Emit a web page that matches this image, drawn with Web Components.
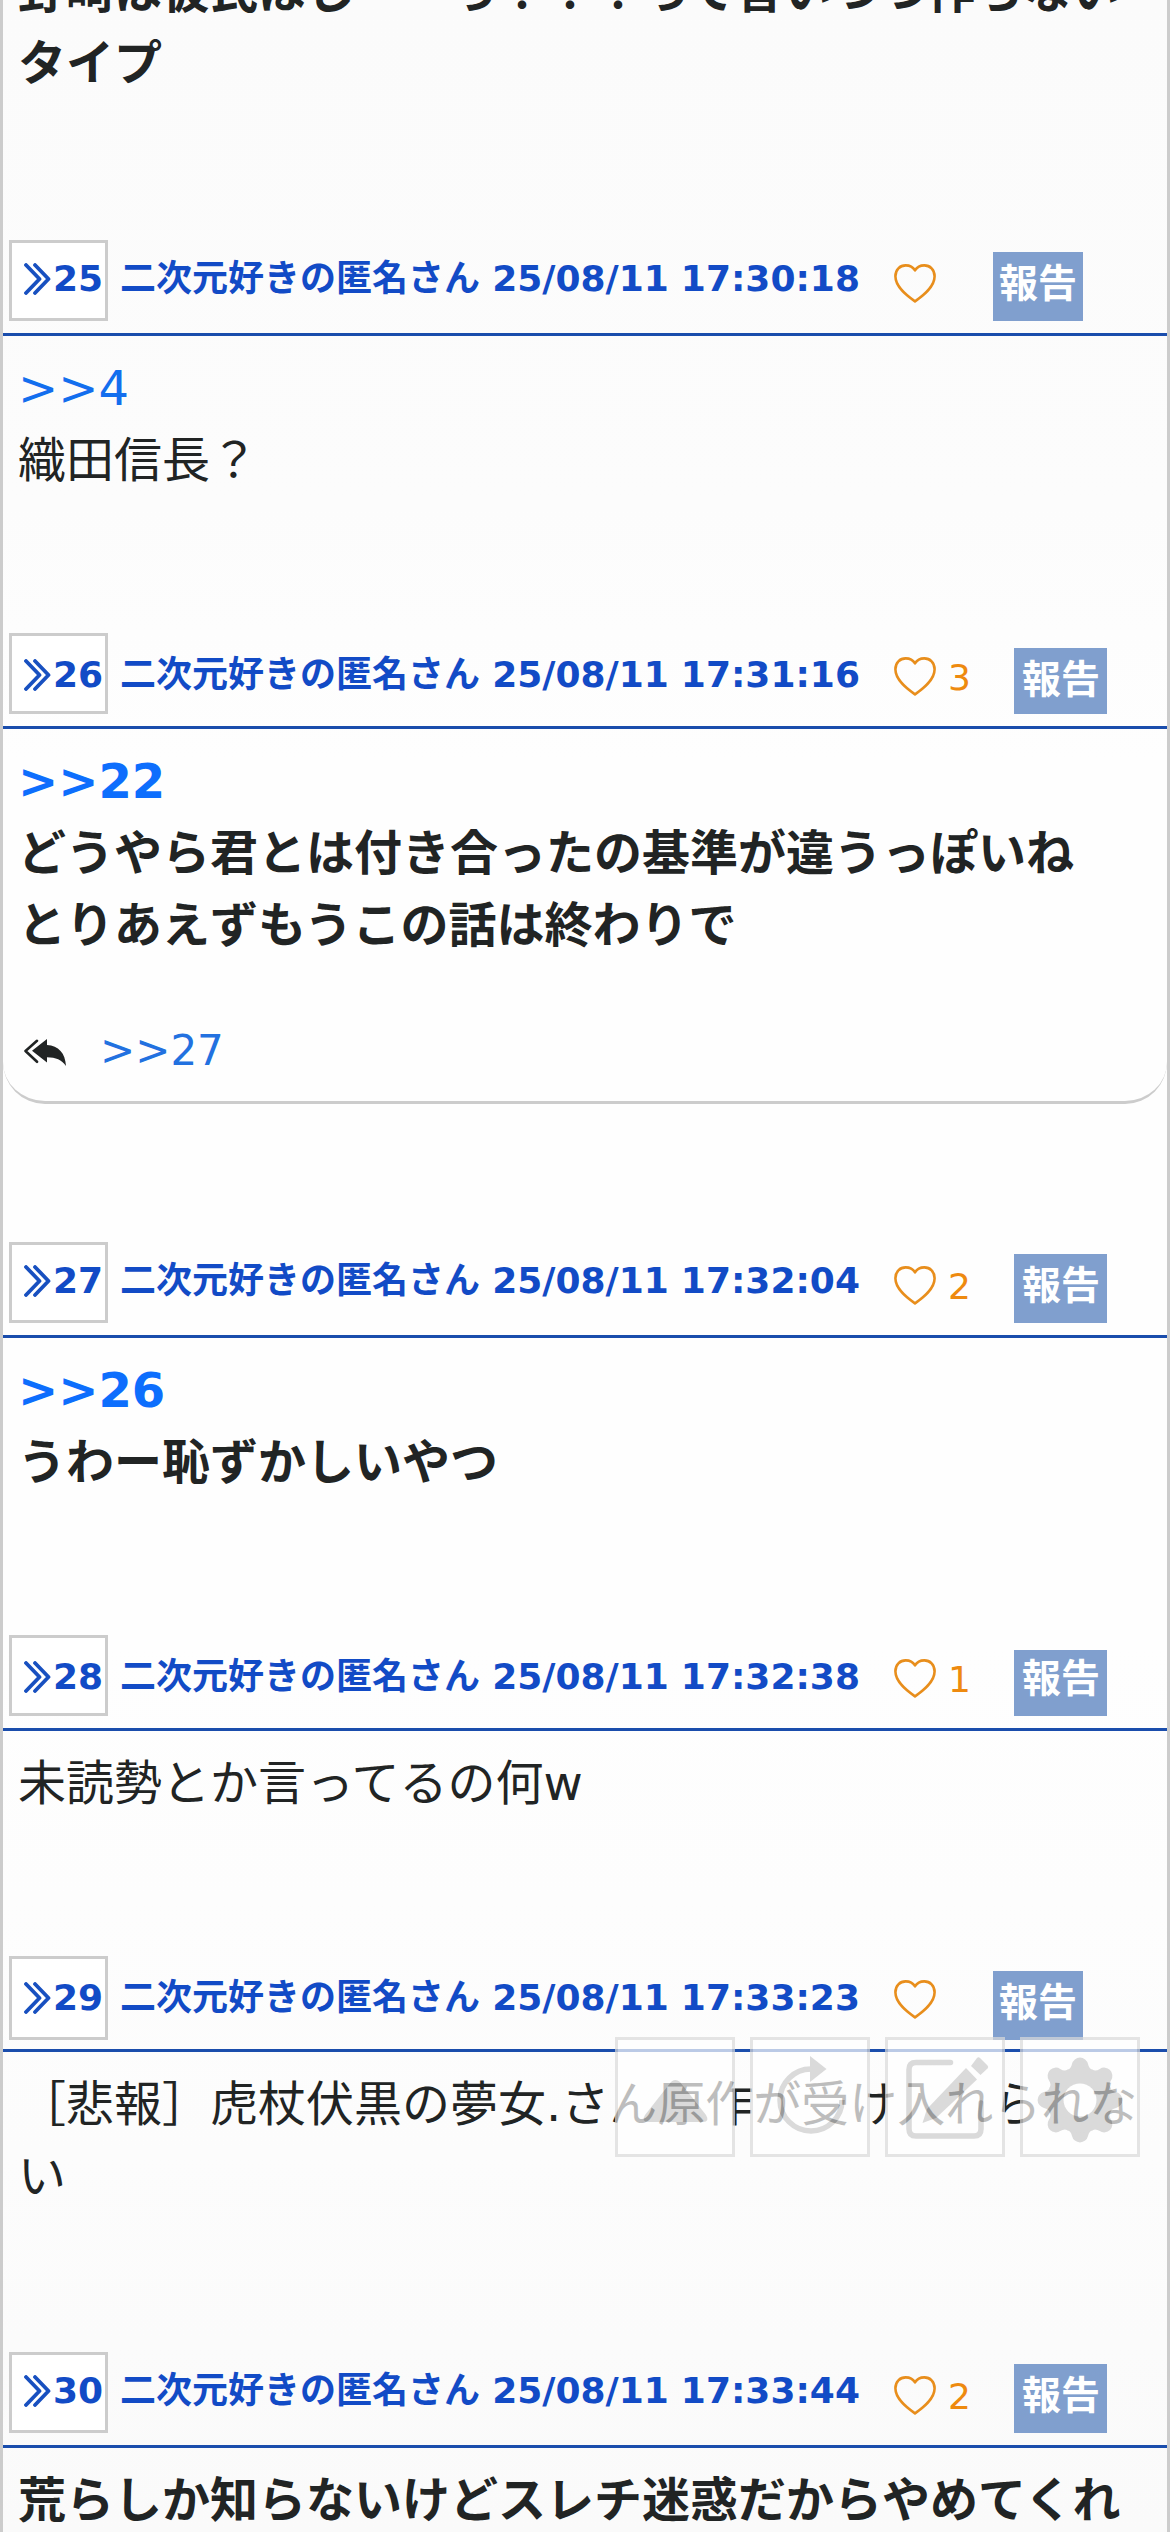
<!DOCTYPE html>
<html lang="ja">
<head>
<meta charset="utf-8">
<title>スレッド</title>
<style>
html,body{margin:0;padding:0}
body{width:1170px;height:2532px;overflow:hidden;position:relative;font-family:"DejaVu Sans","Noto Sans CJK JP",sans-serif;color:#212424;background:#fff}
</style>
</head>
<body>
<thread-view>
  <forum-post style="--h:240px;--shift:-61px" bold first>野崎は彼氏ほしーーっ！！！って言いつつ作らない<br>タイプ</forum-post>
  <forum-post no="25" time="25/08/11 17:30:18" style="--h:297px;--name:16px;--rep:12px;--rt:4px"><res-link>&gt;&gt;4</res-link><br>織田信長？</forum-post>
  <forum-post no="26" time="25/08/11 17:31:16" likes="3" bold style="--h:513px;--name:19px;--rep:15px;--rt:4px"><res-link>&gt;&gt;22</res-link><br>どうやら君とは付き合ったの基準が違うっぽいね<br>とりあえずもうこの話は終わりで<reply-list slot="replies">&gt;&gt;27</reply-list></forum-post>
  <forum-post no="27" time="25/08/11 17:32:04" likes="2" bold style="--h:297px;--name:16px;--rep:12px;--rt:4px"><res-link>&gt;&gt;26</res-link><br>うわー恥ずかしいやつ</forum-post>
  <forum-post no="28" time="25/08/11 17:32:38" likes="1" style="--h:225px;--name:19px;--rep:15px;--rt:1px"><span>未読勢とか言ってるの何w</span></forum-post>
  <forum-post no="29" time="25/08/11 17:33:23" style="--h:300px;--name:19px;--rep:15px;--rt:4px;--box:84px">［悲報］虎杖伏黒の夢女.さん原作が受け入れられな<br>い</forum-post>
  <forum-post no="30" time="25/08/11 17:33:44" likes="2" bold style="--h:297px;--name:16px;--rep:12px;--rt:4px">荒らしか知らないけどスレチ迷惑だからやめてくれ</forum-post>
</thread-view>
<tool-bar></tool-bar>
<script>
class ThreadView extends HTMLElement{
  constructor(){super();this.attachShadow({mode:'open'}).innerHTML=`<style>
  :host{display:flex;flex-direction:column;box-sizing:border-box;height:2532px;overflow:hidden;border-left:3px solid #ccc;border-right:3px solid #ccc;background:linear-gradient(#fbfbfb,#fcfcfc 20%,#fefefe 30%,#fefefe 65%,#fcfcfc 85%,#fafafa)}
  </style><slot></slot>`}
}
class ResLink extends HTMLElement{
  constructor(){super();this.attachShadow({mode:'open'}).innerHTML=`<style>:host{display:inline;color:#136eee}:host-context([bold]){color:#0d6efd}</style><slot></slot>`}
}
class LikeButton extends HTMLElement{
  connectedCallback(){
    const n=this.getAttribute('count')||'';
    this.attachShadow({mode:'open'}).innerHTML=`<style>
    :host{display:flex;align-items:flex-start;color:#ee8a0f;font-size:36px;line-height:45px}
    svg{display:block;width:42px;height:39px;margin-top:24px}
    span{margin:22px 0 0 12px}
    </style><svg viewBox="0 0 42 39" fill="none" stroke="#e88e1c" stroke-width="2.6" stroke-linejoin="round"><path d="M21 37.4C14 32.5 1.400 23.500 1.400 12.300C1.400 5.600 6 1.400 11.700 1.400C15.800 1.400 19.200 3.400 21 6.400C22.800 3.400 26.200 1.400 30.300 1.400C36 1.400 40.600 5.600 40.600 12.300C40.600 23.500 28 32.500 21 37.400Z"/></svg>${n?`<span>${n}</span>`:''}`
  }
}
class ReplyList extends HTMLElement{
  constructor(){super();this.attachShadow({mode:'open'}).innerHTML=`<style>
  :host{display:flex;align-items:flex-start;box-sizing:border-box;width:1164px;height:100px;padding-left:21px;border-bottom:3px solid #ccc;border-radius:0 0 42px 42px;font-weight:400;font-size:42px;line-height:60px;color:#2271e0}
  svg{display:block;width:42px;height:27px;margin:35px 34px 0 0}
  span{margin-top:17px}
  </style><svg viewBox="0 0 42 27"><path fill="#212424" d="M8 11.7L23 0V6C34.5 6.7 41.3 14 42 27C37.5 20.5 32 18.5 23 18.2V23.5Z"/><path d="M13 1.8L1.5 12L13 22.8" fill="none" stroke="#212424" stroke-width="2.6" stroke-linecap="round" stroke-linejoin="round"/></svg><span><slot></slot></span>`}
}
class ForumPost extends HTMLElement{
  connectedCallback(){
    const a=k=>this.getAttribute(k)||'',n=a('likes');
    const head=this.hasAttribute('first')?'':`<header>
      <div class="no"><svg viewBox="0 0 27 32" fill="none" stroke="#1850c0" stroke-width="3.8" stroke-linecap="round" stroke-linejoin="round"><path d="M2 2L15.500 16L2 30M11 2L24.500 16L11 30"/></svg><b>${a('no')}</b></div>
      <div class="name">二次元好きの匿名さん ${a('time')}</div>
      <like-button count="${n}"></like-button>
      <div class="report ${n?'wide':''}">報告</div></header>`;
    this.attachShadow({mode:'open'}).innerHTML=`<style>
    :host{display:block;flex:none}
    header{display:flex;align-items:flex-start;box-sizing:border-box;height:96px;border-bottom:3px solid #1a4dac;padding-left:6px;color:#124bc6;font-weight:700;font-size:36px;line-height:45px;white-space:nowrap}
    .no{display:flex;box-sizing:border-box;width:99px;height:var(--box,81px);border:3px solid #ccc;background:#fff;padding:calc(var(--name) - 3px) 0 0 12px}
    .no svg{width:27px;height:32px;margin:7px 2px 0 0;flex:none}
    .name{width:774px;margin:var(--name) 0 0 12px;word-spacing:-.4px}
    like-button{width:99px;font-weight:400}
    .report{box-sizing:border-box;width:90px;height:calc(var(--box,81px) - var(--rep));margin-top:var(--rep);background:#809fce;color:#fff;font:700 39px/48px "Noto Sans CJK JP",sans-serif;padding:var(--rt) 0 0 6px}
    .wide{width:93px;margin-left:21px;padding-left:8px}
    .body{display:flex;flex-direction:column;box-sizing:border-box;height:var(--h);font-size:48px;line-height:72px;white-space:nowrap;padding:16px 0 0 15px}
    :host([bold]) .body{font-weight:700}
    .text{display:block;margin-top:var(--shift,0)}
    .replies{display:block;margin:43px 0 0 -15px}
    </style>${head}<div class="body"><div class="text"><slot></slot></div><div class="replies"><slot name="replies"></slot></div></div>`
  }
}
class ToolBar extends HTMLElement{
  constructor(){super();
    let teeth='';
    for(let i=0;i<8;i++)teeth+=`<path transform="rotate(${i*45} 60 63)" d="M47 33Q51 32 52 27A8.200 8.200 0 0 1 68 27Q69 32 73 33L66 48H54Z"/>`;
    const icons=[
      '<path d="M56 45Q60 41 65 45L91 78Q95 85 88 85H33Q26 85 30 78Z"/>',
      '<path d="M61 32A31 31 0 1 0 92 63" fill="none" stroke="#ccc" stroke-width="5.5"/><path d="M60 19L76.500 32L60 45Z"/>',
      '<path d="M65.500 25.500H31Q24 25.500 24 32.500V92Q24 99 31 99H89Q96 99 96 92V66" fill="none" stroke="#ccc" stroke-width="5.5" stroke-linecap="round"/><path d="M81 31L92 42.500L51 81L37.500 86L42 72Z"/><path d="M86 29L92 21Q93.500 19.500 95 21L102.500 28.500Q104 30 102.500 31.500L95.500 38Z"/>',
      `${teeth}<circle cx="60" cy="63" r="24.500" fill="none" stroke="#ccc" stroke-width="16"/><circle cx="60" cy="63" r="16.500" fill="#fff"/>`];
    this.attachShadow({mode:'open'}).innerHTML=`<style>
    :host{display:flex;gap:15px;position:absolute;left:615px;top:2037px;opacity:.7}
    div{box-sizing:border-box;width:120px;height:120px;border:3px solid #dadada;background:#fff}
    svg{display:block;width:120px;height:120px;margin:-3px}
    </style>${icons.map(s=>`<div><svg viewBox="0 0 120 120" fill="#ccc">${s}</svg></div>`).join('')}`}
}
customElements.define('res-link',ResLink);
customElements.define('like-button',LikeButton);
customElements.define('reply-list',ReplyList);
customElements.define('forum-post',ForumPost);
customElements.define('thread-view',ThreadView);
customElements.define('tool-bar',ToolBar);
</script>
</body>
</html>
